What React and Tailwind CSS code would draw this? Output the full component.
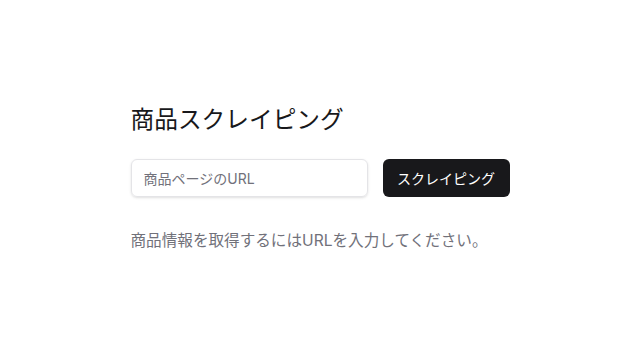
import { useState } from "react";

function App() {
  let [url, setUrl] = useState("");

  return (
    <div
      className="min-h-screen flex items-center justify-center bg-white"
      style={{ fontFamily: 'Inter, "Noto Sans CJK JP", sans-serif' }}
    >
      <div className="w-[379px]">
        <h1 className="text-[23.7px] leading-8 font-normal text-[#18181b] mb-[23px]">
          商品スクレイピング
        </h1>
        <div className="flex gap-[15px] h-[38px]">
          <input
            type="text"
            value={url}
            onChange={(e) => setUrl(e.target.value)}
            placeholder="商品ページのURL"
            className="flex-1 min-w-0 rounded-md border border-[#e4e4e7] px-3 text-[14px] text-[#18181b] placeholder:text-[#71717a] outline-none shadow-sm"
          />
          <button className="w-[127px] rounded-md bg-[#18181b] text-white text-[14px]">
            スクレイピング
          </button>
        </div>
        <p className="mt-[32px] text-[15.6px] leading-6 text-[#71717a]">
          商品情報を取得するにはURLを入力してください。
        </p>
      </div>
    </div>
  );
}

export default App;
